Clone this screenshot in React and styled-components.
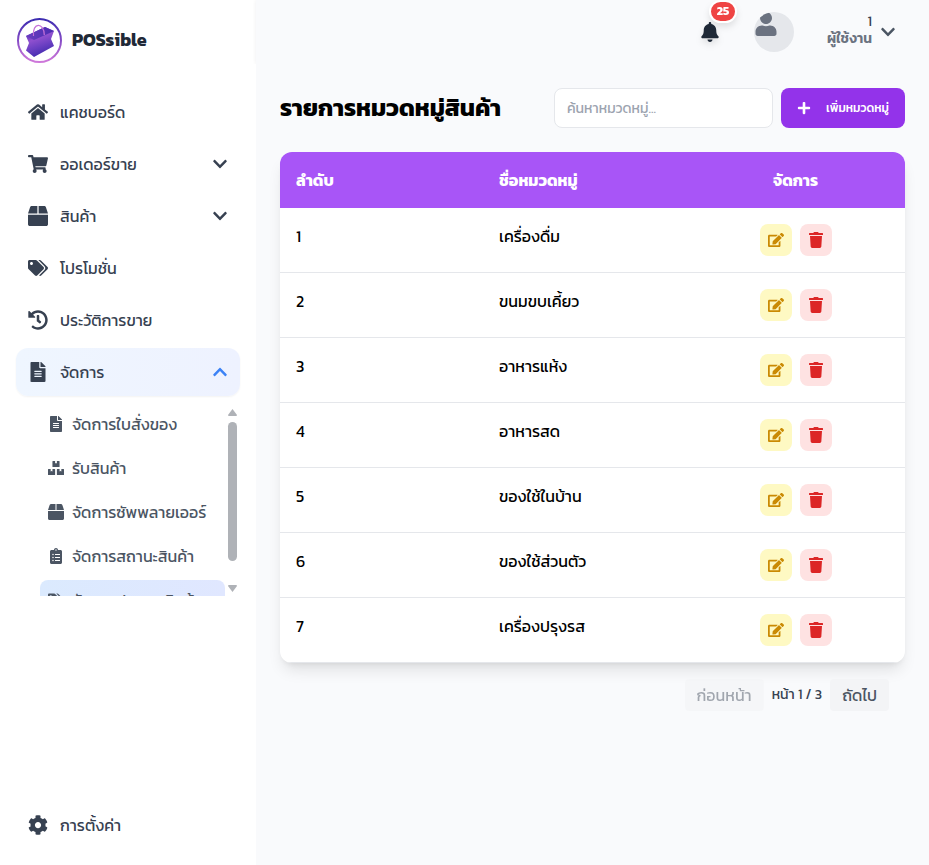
import React from "react";
import styled, { createGlobalStyle } from "styled-components";
import {
  FaHome, FaShoppingCart, FaBox, FaTags, FaHistory, FaFileAlt, FaBoxes, FaClipboardList,
  FaCog, FaBell, FaUser, FaEdit, FaTrash, FaPlus, FaChevronDown, FaChevronUp,
} from "react-icons/fa";

const GlobalStyle = createGlobalStyle`
  *, *::before, *::after { box-sizing: border-box; }
  html, body { margin: 0; padding: 0; }
  body {
    font-family: Kanit, "Noto Sans", sans-serif;
    font-size: 16px;
    line-height: 24px;
    background: #f9fafc;
    overflow: hidden;
  }
  button, input { font: inherit; margin: 0; }
  svg { display: block; flex-shrink: 0; }
`;

const Page = styled.div`
  display: flex;
  height: 865px;
`;

/* ---------- Sidebar ---------- */

const Sidebar = styled.aside`
  width: 256px;
  flex-shrink: 0;
  display: flex;
  flex-direction: column;
  background: #fff;
`;

const Brand = styled.div`
  display: flex;
  align-items: center;
  gap: 8px;
  height: 80px;
  padding: 0 16px;
  font-size: 18px;
  font-weight: 700;
  line-height: 28px;
  color: #1f2937;
`;

const Nav = styled.nav`
  display: flex;
  flex-direction: column;
  gap: 4px;
  padding: 8px 16px 0;
`;

const NavItem = styled.a`
  display: flex;
  align-items: center;
  gap: 12px;
  height: 48px;
  padding: 0 12px;
  border-radius: 12px;
  color: #374151;
  background: ${(p) => (p.$active ? "linear-gradient(to right, #eff6ff, #eef2ff)" : "none")};
  box-shadow: ${(p) => (p.$active ? "0 1px 2px rgba(0,0,0,0.05)" : "none")};
`;

const NavLabel = styled.span`
  flex: 1;
`;

const Caret = styled.span`
  display: flex;
  font-size: 16px;
  color: ${(p) => (p.$open ? "#3b82f6" : "#374151")};
`;

const SubNav = styled.div`
  display: flex;
  justify-content: space-between;
  height: 192px;
  margin-top: 8px;
  margin-bottom: auto;
  padding: 0 16px 0 40px;
  overflow: hidden;
`;

const SubList = styled.div`
  display: flex;
  flex-direction: column;
  gap: 4px;
  width: 185px;
`;

const SubItem = styled.a`
  display: flex;
  align-items: center;
  gap: 8px;
  height: 40px;
  flex-shrink: 0;
  padding: 0 8px;
  border-radius: 8px;
  white-space: nowrap;
  color: #4b5563;
  background: ${(p) => (p.$active ? "linear-gradient(to right, #dbeafe, #e0e7ff)" : "none")};
`;

const ScrollBar = styled.div`
  display: flex;
  flex-direction: column;
  align-items: center;
  width: 15px;
  padding-top: 5px;
  color: #afb2b7;
`;

const Thumb = styled.div`
  width: 9px;
  height: 139px;
  margin: 6px 0 24px;
  border-radius: 5px;
  background: #afb2b7;
`;

const SidebarFooter = styled.div`
  padding: 16px;
`;

/* ---------- Header ---------- */

const Main = styled.main`
  flex: 1;
  min-width: 0;
`;

const Header = styled.header`
  display: flex;
  align-items: center;
  justify-content: flex-end;
  height: 64px;
  padding-right: 33px;
  box-shadow: 0 0 4px rgba(15, 23, 42, 0.07);
  clip-path: inset(0 0 0 -4px);
`;

const Bell = styled.div`
  position: relative;
  margin-right: 34px;
  color: #1f2937;
  filter: drop-shadow(0 4px 3px rgba(0, 0, 0, 0.1));
`;

const Badge = styled.span`
  position: absolute;
  left: 9px;
  top: -22px;
  width: 28px;
  height: 23px;
  border-radius: 12px;
  border: 2px solid #fff;
  background: #ef4444;
  color: #fff;
  font-size: 12px;
  font-weight: 700;
  line-height: 19px;
  text-align: center;
`;

const Avatar = styled.div`
  width: 40px;
  height: 40px;
  margin-right: 33px;
  border-radius: 50%;
  overflow: hidden;
  background: #e5e7eb;
  color: #6b7280;
`;

const UserInfo = styled.div`
  display: flex;
  flex-direction: column;
  align-items: flex-end;
  margin-right: 8px;
  padding-bottom: 4px;
  font-size: 14px;
  line-height: 17px;
  color: #374151;
`;

const UserRole = styled.span`
  font-weight: 600;
  color: #6b7280;
`;

const UserCaret = styled.span`
  color: #4b5563;
`;

/* ---------- Content ---------- */

const Content = styled.section`
  padding: 24px;
`;

const Toolbar = styled.div`
  display: flex;
  align-items: center;
  gap: 8px;
  height: 40px;
  margin-bottom: 24px;
`;

const Title = styled.h1`
  flex: 1;
  margin: 0;
  font-size: 24px;
  font-weight: 700;
  line-height: 32px;
  white-space: nowrap;
  color: #000;
`;

const Search = styled.input`
  width: 219px;
  height: 40px;
  padding: 0 12px;
  border: 1px solid #e5e7eb;
  border-radius: 8px;
  background: #fff;
  font-size: 14px;
  &::placeholder { color: #9ca3af; opacity: 1; }
`;

const AddButton = styled.button`
  display: flex;
  align-items: center;
  justify-content: space-between;
  width: 124px;
  height: 40px;
  padding: 0 16px;
  border: 0;
  border-radius: 8px;
  background: #9333ea;
  color: #fff;
  font-size: 12px;
  font-weight: 500;
  white-space: nowrap;
`;

const Table = styled.div`
  border-radius: 12px;
  overflow: hidden;
  background: #fff;
  box-shadow: 0 10px 15px -3px rgba(0, 0, 0, 0.1), 0 4px 6px -4px rgba(0, 0, 0, 0.1);
`;

const Row = styled.div`
  display: grid;
  grid-template-columns: 203px 203px 1fr;
  height: 65px;
  border-bottom: 1px solid #e5e7eb;
  color: #000;
`;

const HeadRow = styled(Row)`
  height: 56px;
  border: 0;
  background: #a855f7;
  color: #fff;
  font-weight: 700;
`;

const Cell = styled.div`
  padding: 16px;
  text-align: ${(p) => (p.$center ? "center" : "left")};
`;

const Actions = styled(Cell)`
  display: flex;
  justify-content: center;
  gap: 8px;
`;

const tones = {
  edit: ["#fef9c3", "#ca8a04"],
  remove: ["#fee2e2", "#dc2626"],
};

const ActionButton = styled.button`
  display: flex;
  align-items: center;
  justify-content: center;
  width: 32px;
  height: 32px;
  padding: 0;
  border: 0;
  border-radius: 8px;
  font-size: 16px;
  background: ${(p) => tones[p.$tone][0]};
  color: ${(p) => tones[p.$tone][1]};
`;

const Pager = styled.div`
  display: flex;
  justify-content: flex-end;
  align-items: center;
  gap: 8px;
  padding: 16px 16px 0;
`;

const PageButton = styled.button`
  height: 32px;
  padding: 0 12px;
  border: 0;
  border-radius: 4px;
  background: #f3f4f6;
  color: #4b5563;
  opacity: ${(p) => (p.disabled ? 0.5 : 1)};
`;

const PageInfo = styled.span`
  font-size: 14px;
  line-height: 20px;
  color: #374151;
`;

function Logo() {
  return (
    <svg width="48" height="48" viewBox="0 0 48 48">
      <defs>
        <linearGradient id="ring" x1="0" y1="0" x2="0" y2="1">
          <stop offset="0" stopColor="#3b2bb0" />
          <stop offset="0.55" stopColor="#8d50c8" />
          <stop offset="1" stopColor="#cf78da" />
        </linearGradient>
        <linearGradient id="front" x1="0.35" y1="0.1" x2="0.65" y2="1">
          <stop offset="0" stopColor="#5a35bb" />
          <stop offset="0.3" stopColor="#8f50cf" />
          <stop offset="0.6" stopColor="#6a3fc2" />
          <stop offset="1" stopColor="#3a27aa" />
        </linearGradient>
        <linearGradient id="inside" x1="0" y1="0" x2="1" y2="0">
          <stop offset="0" stopColor="#6a3dc0" />
          <stop offset="1" stopColor="#4a2cb0" />
        </linearGradient>
      </defs>
      <circle cx="23.5" cy="24.5" r="21.5" fill="#fff" stroke="url(#ring)" strokeWidth="2" />
      <path d="M10 20 L29 11 L38 15 L35 23 L38 30 L18 41 L10 34.500 L13 27 Z" fill="url(#front)" />
      <path d="M10 20 L29 11 L38 15 L18 24 Z" fill="url(#inside)" />
      <path d="M17.500 20 C16 6 28 6 28.300 19" fill="none" stroke="#c470d8" strokeWidth="1.200" />
    </svg>
  );
}

const navItems = [
  { label: "แคชบอร์ด", icon: FaHome },
  { label: "ออเดอร์ขาย", icon: FaShoppingCart, caret: true },
  { label: "สินค้า", icon: FaBox, caret: true },
  { label: "โปรโมชั่น", icon: FaTags },
  { label: "ประวัติการขาย", icon: FaHistory },
  { label: "จัดการ", icon: FaFileAlt, caret: true, open: true },
];

const subItems = [
  { label: "จัดการใบสั่งของ", icon: FaFileAlt },
  { label: "รับสินค้า", icon: FaBoxes },
  { label: "จัดการซัพพลายเออร์", icon: FaBox },
  { label: "จัดการสถานะสินค้า", icon: FaClipboardList },
  { label: "จัดการประเภทสินค้า", icon: FaTags, active: true },
];

const categories = [
  "เครื่องดื่ม", "ขนมขบเคี้ยว", "อาหารแห้ง", "อาหารสด", "ของใช้ในบ้าน", "ของใช้ส่วนตัว", "เครื่องปรุงรส",
];

export default function App() {
  return (
    <Page>
      <GlobalStyle />
      <Sidebar>
        <Brand><Logo />POSsible</Brand>
        <Nav>
          {navItems.map(({ label, icon: Icon, caret, open }) => (
            <NavItem key={label} $active={open}>
              <Icon size={20} />
              <NavLabel>{label}</NavLabel>
              {caret && <Caret $open={open}>{open ? <FaChevronUp /> : <FaChevronDown />}</Caret>}
            </NavItem>
          ))}
        </Nav>
        <SubNav>
          <SubList>
            {subItems.map(({ label, icon: Icon, active }) => (
              <SubItem key={label} $active={active}>
                <Icon size={16} />
                {label}
              </SubItem>
            ))}
          </SubList>
          <ScrollBar>
            <svg width="9" height="7" viewBox="0 0 9 7"><path d="M4.500 0 L9 6 Q9 7 8 7 H1 Q0 7 0 6 Z" fill="currentColor" /></svg>
            <Thumb />
            <svg width="9" height="7" viewBox="0 0 9 7"><path d="M4.500 7 L9 1 Q9 0 8 0 H1 Q0 0 0 1 Z" fill="currentColor" /></svg>
          </ScrollBar>
        </SubNav>
        <SidebarFooter>
          <NavItem><FaCog size={20} /><NavLabel>การตั้งค่า</NavLabel></NavItem>
        </SidebarFooter>
      </Sidebar>
      <Main>
        <Header>
          <Bell><FaBell size={20} /><Badge>25</Badge></Bell>
          <Avatar><FaUser size={24} /></Avatar>
          <UserInfo><span>1</span><UserRole>ผู้ใช้งาน</UserRole></UserInfo>
          <UserCaret><FaChevronDown size={16} /></UserCaret>
        </Header>
        <Content>
          <Toolbar>
            <Title>รายการหมวดหมู่สินค้า</Title>
            <Search placeholder="ค้นหาหมวดหมู่..." />
            <AddButton><FaPlus size={14} />เพิ่มหมวดหมู่</AddButton>
          </Toolbar>
          <Table>
            <HeadRow>
              <Cell>ลำดับ</Cell>
              <Cell>ชื่อหมวดหมู่</Cell>
              <Cell $center>จัดการ</Cell>
            </HeadRow>
            {categories.map((name, i) => (
              <Row key={name}>
                <Cell>{i + 1}</Cell>
                <Cell>{name}</Cell>
                <Actions>
                  <ActionButton $tone="edit"><FaEdit /></ActionButton>
                  <ActionButton $tone="remove"><FaTrash /></ActionButton>
                </Actions>
              </Row>
            ))}
          </Table>
          <Pager>
            <PageButton disabled>ก่อนหน้า</PageButton>
            <PageInfo>หน้า 1 / 3</PageInfo>
            <PageButton>ถัดไป</PageButton>
          </Pager>
        </Content>
      </Main>
    </Page>
  );
}
